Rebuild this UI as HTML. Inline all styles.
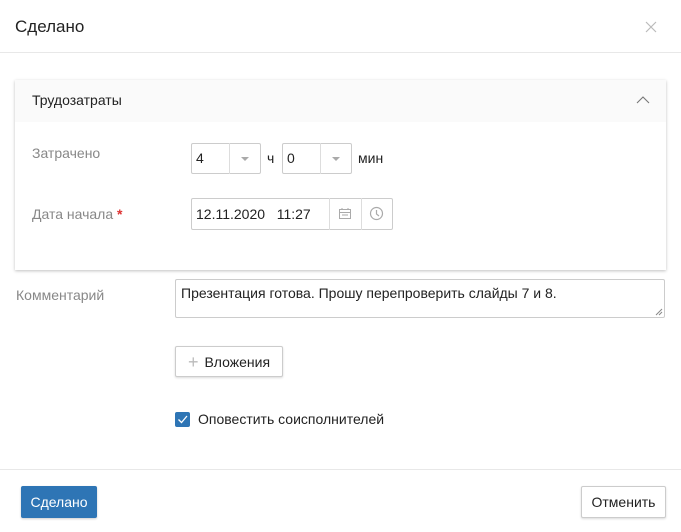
<!DOCTYPE html>
<html><head><meta charset="utf-8"><style>
*{box-sizing:border-box;margin:0;padding:0}
body{width:681px;height:532px;background:#fff;font-family:"Liberation Sans",sans-serif;font-size:14px;color:#222;position:relative;overflow:hidden}
.a{position:absolute}
.lbl{color:#888;font-size:14px}
.box{border:1px solid #ccc;border-radius:2px;background:#fff}
.btn{border:1px solid #ccc;border-radius:2px;background:#fff;box-shadow:0 1px 2px rgba(0,0,0,.15);display:flex;align-items:center;justify-content:center}
.caret{width:0;height:0;border-left:4px solid transparent;border-right:4px solid transparent;border-top:4px solid #aaa}
</style></head><body>
<div class="a" style="left:15px;top:17px;font-size:17px;color:#222">Сделано</div>
<svg class="a" style="left:645px;top:21px" width="12" height="12"><path d="M1 1L11 11M11 1L1 11" stroke="#bbb" stroke-width="1.2"/></svg>
<div class="a" style="left:0;top:52px;width:681px;border-top:1px solid #e8e8e8"></div>

<div class="a" style="left:15px;top:80px;width:651px;height:190px;background:#fff;box-shadow:0 1px 3px rgba(0,0,0,.25)"></div>
<div class="a" style="left:15px;top:80px;width:651px;height:42px;background:#fafafa"></div>
<div class="a" style="left:32px;top:92px;color:#222">Трудозатраты</div>
<svg class="a" style="left:636px;top:95px" width="14" height="9"><path d="M1 8L7 2L13 8" stroke="#777" stroke-width="1.1" fill="none"/></svg>

<div class="a lbl" style="left:32px;top:145px">Затрачено</div>
<div class="a box" style="left:191px;top:143px;width:70px;height:31px"></div>
<div class="a" style="left:229px;top:143px;height:31px;border-left:1px solid #ddd"></div>
<div class="a" style="left:196px;top:150px">4</div>
<div class="a caret" style="left:241px;top:157px"></div>
<div class="a" style="left:267px;top:150px">ч</div>
<div class="a box" style="left:282px;top:143px;width:70px;height:31px"></div>
<div class="a" style="left:320px;top:143px;height:31px;border-left:1px solid #ddd"></div>
<div class="a" style="left:287px;top:150px">0</div>
<div class="a caret" style="left:332px;top:157px"></div>
<div class="a" style="left:358px;top:150px">мин</div>

<div class="a lbl" style="left:32px;top:206px">Дата начала <span style="color:#d33;font-weight:bold">*</span></div>
<div class="a box" style="left:191px;top:198px;width:202px;height:32px"></div>
<div class="a" style="left:329px;top:198px;height:32px;border-left:1px solid #ddd"></div>
<div class="a" style="left:361px;top:198px;height:32px;border-left:1px solid #ddd"></div>
<div class="a" style="left:196px;top:206px">12.11.2020&nbsp;&nbsp;&nbsp;11:27</div>
<svg class="a" style="left:338px;top:207px" width="14" height="13"><rect x="1.5" y="2.5" width="11" height="9" fill="none" stroke="#aaa"/><path d="M1.5 5.5H12.5M4 1V3M10 1V3M4 8H10" stroke="#aaa"/></svg>
<svg class="a" style="left:369px;top:206px" width="15" height="15"><circle cx="7.5" cy="7.5" r="6" fill="none" stroke="#aaa" stroke-width="1.2"/><path d="M7.5 4V8L10 10" stroke="#aaa" stroke-width="1.2" fill="none"/></svg>

<div class="a lbl" style="left:16px;top:287px">Комментарий</div>
<div class="a box" style="left:175px;top:279px;width:490px;height:39px"></div>
<div class="a" style="left:181px;top:285px">Презентация готова. Прошу перепроверить слайды 7 и 8.</div>
<svg class="a" style="left:655px;top:308px" width="8" height="8"><path d="M1 7L7 1M4 7L7 4" stroke="#888"/></svg>

<div class="a btn" style="left:175px;top:346px;width:108px;height:31px"><span style="color:#bbb;font-size:18px;margin-right:6px;line-height:1">+</span>Вложения</div>

<div class="a" style="left:175px;top:412px;width:15px;height:15px;background:#2e75b5;border-radius:2px"></div>
<svg class="a" style="left:175px;top:412px" width="15" height="15"><path d="M3.5 7.5L6.5 10.5L12 4" stroke="#fff" stroke-width="1.3" fill="none"/></svg>
<div class="a" style="left:198px;top:411px">Оповестить соисполнителей</div>

<div class="a" style="left:0;top:469px;width:681px;border-top:1px solid #e8e8e8"></div>
<div class="a" style="left:21px;top:486px;width:76px;height:32px;background:#2e75b5;border-radius:2px;color:#fff;display:flex;align-items:center;justify-content:center;box-shadow:0 1px 2px rgba(0,0,0,.2)">Сделано</div>
<div class="a btn" style="left:581px;top:486px;width:85px;height:32px">Отменить</div>
</body></html>
